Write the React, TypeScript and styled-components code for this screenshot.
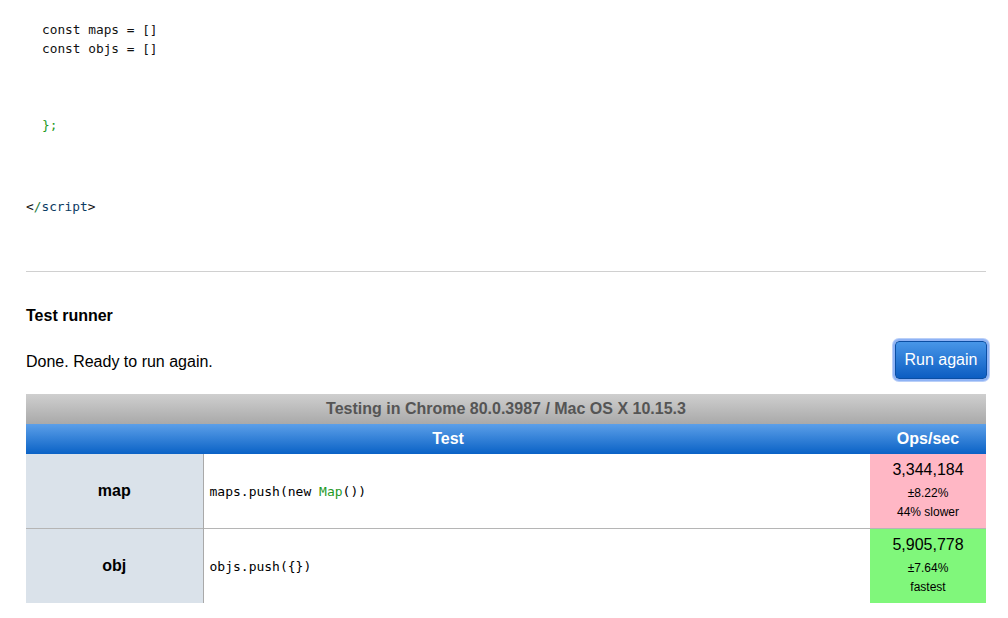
import React from "react";
import styled, { createGlobalStyle } from "styled-components";

const Global = createGlobalStyle`
  html, body { margin: 0; padding: 0; background: #fff; }
  body { font-family: "Liberation Sans", Arial, Helvetica, sans-serif; color: #000; }
`;

const Page = styled.div`
  padding: 20px 22px 0 26px;
  display: flex;
  flex-direction: column;
`;

const Code = styled.pre<{ $indent?: number }>`
  margin: 0;
  font-family: "DejaVu Sans Mono", "Liberation Mono", monospace;
  font-size: 12.8px;
  line-height: 19px;
  color: #111;
  padding-left: ${(p) => p.$indent ?? 0}px;
`;

const Green = styled.span`
  color: #1f9a1f;
`;
const Navy = styled.span`
  color: #0b3b63;
`;
const Teal = styled.span`
  color: #1e7a3e;
`;

const Gap = styled.div<{ $h: number }>`
  height: ${(p) => p.$h}px;
`;

const Rule = styled.hr`
  margin: 0;
  border: none;
  border-top: 1px solid #d0d0d0;
  height: 0;
`;

const Heading = styled.h3`
  margin: 35px 0 0;
  font-size: 16px;
  line-height: 18px;
  font-weight: bold;
`;

const StatusRow = styled.div`
  margin-top: 13px;
  display: flex;
  justify-content: space-between;
  align-items: center;
  height: 44px;
`;

const Status = styled.span`
  font-size: 16px;
  margin-top: 4px;
`;

const RunButton = styled.button`
  margin-right: -1px;
  width: 92px;
  height: 38px;
  border: 1px solid #0b4ea3;
  border-radius: 4px;
  background: linear-gradient(#4896e8, #0c5dc2);
  color: #fff;
  font-family: "Liberation Sans", Arial, sans-serif;
  font-size: 16px;
  box-shadow: 0 0 0 2px #8fb3f5, 0 0 0 3px #b9cff8;
  padding: 0;
  cursor: pointer;
`;

const Table = styled.table`
  margin-top: 12px;
  width: 960px;
  border-collapse: collapse;
  table-layout: fixed;
`;

const Caption = styled.th`
  height: 30px;
  padding: 0;
  background: linear-gradient(#cfcfcf, #a9a9a9);
  color: #555;
  font-size: 16px;
  font-weight: bold;
  text-align: center;
`;

const HeadCell = styled.th`
  height: 30px;
  padding: 0;
  background: linear-gradient(#5c9fe8, #0a62c6);
  color: #fff;
  font-size: 16px;
  font-weight: bold;
  text-align: center;
`;

const Row = styled.tr<{ $last?: boolean }>`
  border-bottom: ${(p) => (p.$last ? "none" : "1px solid #b5b5b5")};
`;

const NameCell = styled.th`
  height: 74px;
  padding: 0;
  background: #dae2ea;
  border-right: 1px solid #a9a9a9;
  font-size: 16px;
  font-weight: bold;
  text-align: center;
`;

const CodeCell = styled.td`
  padding: 0 0 0 6px;
  font-family: "DejaVu Sans Mono", "Liberation Mono", monospace;
  font-size: 13px;
  vertical-align: middle;
`;

const ResultCell = styled.td<{ $tone: "slow" | "fast" }>`
  padding: 4px 0 0;
  vertical-align: top;
  text-align: center;
  background: ${(p) => (p.$tone === "slow" ? "#ffb7c5" : "#80f77b")};
`;

const Ops = styled.div`
  font-size: 16px;
  line-height: 24px;
  margin-bottom: 2px;
`;

const Small = styled.div`
  font-size: 12px;
  line-height: 19px;
`;

type Result = {
  name: string;
  code: React.ReactNode;
  ops: string;
  rme: string;
  note: string;
  tone: "slow" | "fast";
};

const results: Result[] = [
  {
    name: "map",
    code: (
      <>
        maps.push(new <Green>Map</Green>())
      </>
    ),
    ops: "3,344,184",
    rme: "±8.22%",
    note: "44% slower",
    tone: "slow",
  },
  {
    name: "obj",
    code: <>objs.push({"{}"})</>,
    ops: "5,905,778",
    rme: "±7.64%",
    note: "fastest",
    tone: "fast",
  },
];

export default function App() {
  return (
    <Page>
      <Global />
      <Code $indent={16}>
        {"const maps = []\nconst objs = []\n\n\n\n"}
        <Green>{"};"}</Green>
      </Code>
      <Gap $h={63} />
      <Code>
        {"<"}
        <Teal>/</Teal>
        <Navy>script</Navy>
        {">"}
      </Code>
      <Gap $h={55} />
      <Rule />
      <Heading>Test runner</Heading>
      <StatusRow>
        <Status>Done. Ready to run again.</Status>
        <RunButton>Run again</RunButton>
      </StatusRow>
      <Table>
        <colgroup>
          <col style={{ width: 177 }} />
          <col />
          <col style={{ width: 116 }} />
        </colgroup>
        <thead>
          <tr>
            <Caption colSpan={3}>Testing in Chrome 80.0.3987 / Mac OS X 10.15.3</Caption>
          </tr>
          <tr>
            <HeadCell colSpan={2}>Test</HeadCell>
            <HeadCell>Ops/sec</HeadCell>
          </tr>
        </thead>
        <tbody>
          {results.map((r, i) => (
            <Row key={r.name} $last={i === results.length - 1}>
              <NameCell>{r.name}</NameCell>
              <CodeCell>{r.code}</CodeCell>
              <ResultCell $tone={r.tone}>
                <Ops>{r.ops}</Ops>
                <Small>{r.rme}</Small>
                <Small>{r.note}</Small>
              </ResultCell>
            </Row>
          ))}
        </tbody>
      </Table>
    </Page>
  );
}
